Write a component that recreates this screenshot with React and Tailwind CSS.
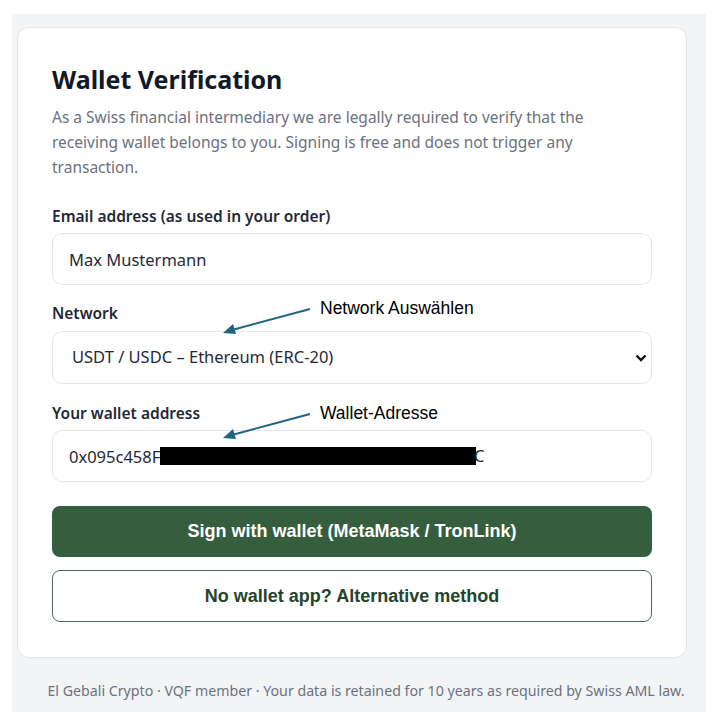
import React, { useState } from "react";

const inputClass =
  "block w-full h-[52px] px-4 text-[16.5px] text-[#1f2937] bg-white border border-[#e5e7eb] rounded-[10px] outline-none";

function Arrow({ className }) {
  return (
    <svg width="90" height="28" viewBox="0 0 90 28" className={"absolute z-10 " + className}>
      <line x1="88" y1="2" x2="10" y2="23" stroke="#1f6483" strokeWidth="2" />
      <polygon points="1,26 11,17 14,27" fill="#1f6483" />
    </svg>
  );
}

function NoteText({ text, className }) {
  return (
    <span
      className={"absolute left-[268px] text-[17.5px] leading-[20px] text-black " + className}
      style={{ fontFamily: '"Liberation Sans", Arial, sans-serif' }}
    >
      {text}
    </span>
  );
}

export default function App() {
  const [email, setEmail] = useState("Max Mustermann");
  const [network, setNetwork] = useState("erc20");
  const [wallet, setWallet] = useState("0x095c458F");

  return (
    <div
      className="min-h-[716px] bg-white pl-3 pt-[14px] pr-[13px]"
      style={{ fontFamily: '"Noto Sans", "Open Sans", sans-serif' }}
    >
      <div className="bg-[#f3f4f6] pl-[5px] pr-[19px] pt-[13px] pb-[12px]">
        <div className="bg-white border border-[#e5e7eb] rounded-[12px] px-[34px] pt-[34px] pb-[35px]">
          <h1 className="text-[25px] leading-[34px] font-bold text-[#111827]">Wallet Verification</h1>
          <p className="mt-[9px] text-[15.5px] leading-[25px] text-[#6b7280] pr-[40px]">
            As a Swiss financial intermediary we are legally required to verify that the receiving
            wallet belongs to you. Signing is free and does not trigger any transaction.
          </p>

          <div className="mt-[26px]">
            <label className="block text-[15.5px] leading-[20px] font-semibold text-[#1f2937]">
              Email address (as used in your order)
            </label>
            <input
              className={inputClass + " mt-[7px]"}
              type="text"
              value={email}
              onChange={(e) => setEmail(e.target.value)}
            />
          </div>

          <div className="mt-[18px] relative">
            <label className="block text-[15.5px] leading-[20px] font-semibold text-[#1f2937]">Network</label>
            <Arrow className="left-[170px] top-[4px]" />
            <NoteText text="Network Auswählen" className="top-[-5px]" />
            <div className="relative mt-[8px]">
              <select
                className={inputClass + " h-[53px] appearance-none pl-[19px]"}
                value={network}
                onChange={(e) => setNetwork(e.target.value)}
              >
                <option value="erc20">USDT / USDC – Ethereum (ERC-20)</option>
                <option value="trc20">USDT – Tron (TRC-20)</option>
              </select>
              <svg
                width="12"
                height="8"
                viewBox="0 0 12 8"
                className="absolute right-[5px] top-[23px] pointer-events-none"
              >
                <path d="M1.5 1.5 L6 6 L10.5 1.5" stroke="#111" strokeWidth="2.4" fill="none" />
              </svg>
            </div>
          </div>

          <div className="mt-[19px] relative">
            <label className="block text-[15.5px] leading-[20px] font-semibold text-[#1f2937]">
              Your wallet address
            </label>
            <Arrow className="left-[170px] top-[9px]" />
            <NoteText text="Wallet-Adresse" className="top-0" />
            <div className="relative mt-[7px]">
              <input
                className={inputClass}
                type="text"
                value={wallet}
                onChange={(e) => setWallet(e.target.value)}
              />
              <div className="absolute left-[108px] top-[17px] flex items-center">
                <div className="w-[316px] h-[18px] bg-black" />
                <span className="text-[16.5px] leading-[18px] text-[#1f2937] -ml-[2px]">C</span>
              </div>
            </div>
          </div>

          <div
            className="mt-[24px] flex flex-col gap-[13px]"
            style={{ fontFamily: '"Liberation Sans", Arial, sans-serif' }}
          >
            <button className="h-[51px] w-full rounded-[8px] bg-[#355e3f] text-white text-[18px] font-bold">
              Sign with wallet (MetaMask / TronLink)
            </button>
            <button className="h-[52px] w-full rounded-[8px] bg-white border border-[#4d6b55] text-[#24442c] text-[18px] font-bold">
              No wallet app? Alternative method
            </button>
          </div>
        </div>

        <p className="mt-[24px] text-center text-[14.2px] leading-[18px] text-[#6b7280] pl-[28px]">
          El Gebali Crypto · VQF member · Your data is retained for 10 years as required by Swiss AML law.
        </p>
      </div>
    </div>
  );
}
